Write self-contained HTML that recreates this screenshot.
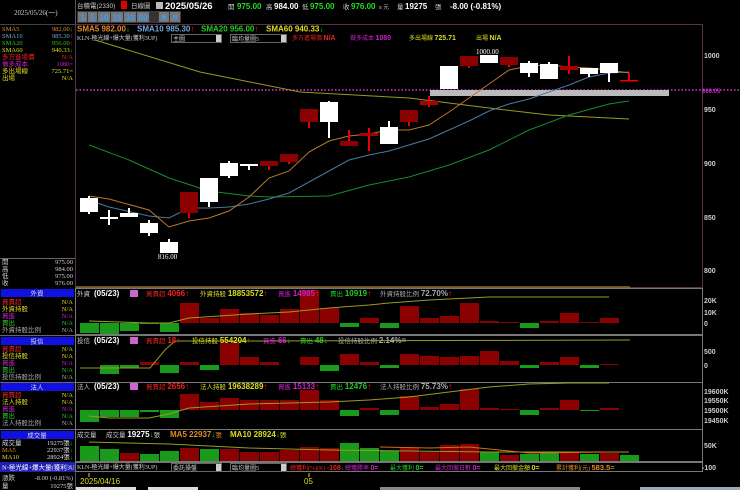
<!DOCTYPE html>
<html><head><meta charset="utf-8"><style>
html,body{margin:0;padding:0;background:#000;width:740px;height:490px;overflow:hidden}
svg{display:block;font-family:"Liberation Sans","Noto Sans CJK TC",sans-serif}
.t{font-size:6.5px}
.b{font-weight:bold;font-size:8px}
</style></head><body>
<svg width="740" height="490" viewBox="0 0 740 490" xmlns="http://www.w3.org/2000/svg">
<rect width="740" height="490" fill="#000"/>
<line x1="75.5" y1="0" x2="75.5" y2="490" stroke="#555"/>
<text x="14" y="15" font-size="7" fill="#ccc" font-family="Liberation Serif">2025/05/26(一)</text>
<line x1="0" y1="24.5" x2="75" y2="24.5" stroke="#444"/>
<g class="t" font-family="Liberation Serif">
<text x="2" y="31" fill="#e08a2a">SMA5</text><text x="73" y="31" fill="#e08a2a" text-anchor="end">982.00<tspan fill="#0c0">↓</tspan></text>
<text x="2" y="38" fill="#6fa8dc">SMA10</text><text x="73" y="38" fill="#6fa8dc" text-anchor="end">985.30<tspan fill="#f22">↑</tspan></text>
<text x="2" y="45" fill="#2c2">SMA20</text><text x="73" y="45" fill="#2c2" text-anchor="end">956.00<tspan fill="#f22">↑</tspan></text>
<text x="2" y="52" fill="#dd2">SMA60</text><text x="73" y="52" fill="#dd2" text-anchor="end">940.33<tspan fill="#0c0">↓</tspan></text>
<text x="2" y="59" fill="#e22">多方進場價</text><text x="73" y="59" fill="#e22" text-anchor="end">N/A</text>
<text x="2" y="66" fill="#c2c">做多成本</text><text x="73" y="66" fill="#c2c" text-anchor="end">1080=</text>
<text x="2" y="73" fill="#dd2">多出場線</text><text x="73" y="73" fill="#dd2" text-anchor="end">725.71=</text>
<text x="2" y="80" fill="#dd2">出場</text><text x="73" y="80" fill="#dd2" text-anchor="end">N/A</text>
</g>
<line x1="0" y1="258.5" x2="75" y2="258.5" stroke="#666"/>
<g class="t" fill="#ccc" font-family="Liberation Serif">
<text x="2" y="264">開</text><text x="73" y="264" text-anchor="end">975.00</text>
<text x="2" y="271">高</text><text x="73" y="271" text-anchor="end">984.00</text>
<text x="2" y="278">低</text><text x="73" y="278" text-anchor="end">975.00</text>
<text x="2" y="285">收</text><text x="73" y="285" text-anchor="end">976.00</text>
</g>
<g class="t" font-family="Liberation Serif">
<rect x="1" y="289" width="73" height="8" fill="#1010e0"/><text x="37" y="295.5" fill="#ddd" text-anchor="middle">外資</text>
<text x="2" y="304" fill="#e22">買賣超</text><text x="73" y="304" fill="#dd2" text-anchor="end">N/A</text>
<text x="2" y="311" fill="#dd2">外資持股</text><text x="73" y="311" fill="#dd2" text-anchor="end">N/A</text>
<text x="2" y="318" fill="#c2c">買進</text><text x="73" y="318" fill="#c2c" text-anchor="end">N/A</text>
<text x="2" y="325" fill="#2c2">賣出</text><text x="73" y="325" fill="#2c2" text-anchor="end">N/A</text>
<text x="2" y="332" fill="#aaa">外資持股比例</text><text x="73" y="332" fill="#aaa" text-anchor="end">N/A</text>
<line x1="0" y1="335.5" x2="75" y2="335.5" stroke="#666"/>
<rect x="1" y="337" width="73" height="8" fill="#1010e0"/><text x="37" y="343.5" fill="#ddd" text-anchor="middle">投信</text>
<text x="2" y="351" fill="#e22">買賣超</text><text x="73" y="351" fill="#dd2" text-anchor="end">N/A</text>
<text x="2" y="358" fill="#dd2">投信持股</text><text x="73" y="358" fill="#dd2" text-anchor="end">N/A</text>
<text x="2" y="365" fill="#c2c">買進</text><text x="73" y="365" fill="#c2c" text-anchor="end">N/A</text>
<text x="2" y="372" fill="#2c2">賣出</text><text x="73" y="372" fill="#2c2" text-anchor="end">N/A</text>
<text x="2" y="379" fill="#aaa">投信持股比例</text><text x="73" y="379" fill="#aaa" text-anchor="end">N/A</text>
<line x1="0" y1="382.5" x2="75" y2="382.5" stroke="#666"/>
<rect x="1" y="383" width="73" height="8" fill="#1010e0"/><text x="37" y="389.5" fill="#ddd" text-anchor="middle">法人</text>
<text x="2" y="397" fill="#e22">買賣超</text><text x="73" y="397" fill="#dd2" text-anchor="end">N/A</text>
<text x="2" y="404" fill="#dd2">法人持股</text><text x="73" y="404" fill="#dd2" text-anchor="end">N/A</text>
<text x="2" y="411" fill="#c2c">買進</text><text x="73" y="411" fill="#c2c" text-anchor="end">N/A</text>
<text x="2" y="418" fill="#2c2">賣出</text><text x="73" y="418" fill="#2c2" text-anchor="end">N/A</text>
<text x="2" y="425" fill="#aaa">法人持股比例</text><text x="73" y="425" fill="#aaa" text-anchor="end">N/A</text>
<line x1="0" y1="429.5" x2="75" y2="429.5" stroke="#666"/>
<rect x="1" y="431" width="73" height="8" fill="#1010e0"/><text x="37" y="437.5" fill="#ddd" text-anchor="middle">成交量</text>
<text x="2" y="445" fill="#ddd">成交量</text><text x="73" y="445" fill="#ddd" text-anchor="end">19275張<tspan fill="#0c0">↓</tspan></text>
<text x="2" y="452" fill="#e08a2a">MA5</text><text x="73" y="452" fill="#ddd" text-anchor="end">22937張<tspan fill="#0c0">↓</tspan></text>
<text x="2" y="459" fill="#dd2">MA10</text><text x="73" y="459" fill="#ddd" text-anchor="end">28924張<tspan fill="#0c0">↓</tspan></text>
<rect x="0" y="462" width="75" height="10" fill="#2020b0"/><text x="2" y="469.5" fill="#fff">N-極光線+爆大量(獲利3U</text>
<text x="2" y="480" fill="#ccc">漲跌</text><text x="73" y="480" fill="#ccc" text-anchor="end">-8.00 (-0.81%)</text>
<text x="2" y="488" fill="#ccc">量</text><text x="73" y="488" fill="#ccc" text-anchor="end">19275張</text>
</g>

<g font-size="6.5" fill="#ccc">
<text x="77" y="8">台積電(2330)</text>
<rect x="121" y="1" width="6" height="8" fill="#d00"/>
<text x="131" y="8">日線圖</text>
<rect x="156" y="2" width="7" height="7" fill="#bbb"/>
</g>
<g class="b">
<text x="165" y="9" fill="#fff" font-size="9.5">2025/05/26</text>
<text x="228" y="9" fill="#ccc" font-size="6.5" font-weight="normal">開</text><text x="237" y="9" fill="#2d2">975.00</text>
<text x="254" y="9" fill="#ccc" font-size="6.5" font-weight="normal" opacity="0"></text>
<text x="266" y="9" fill="#ccc" font-size="6.5" font-weight="normal">高</text><text x="274" y="9" fill="#fff">984.00</text>
<text x="302" y="9" fill="#ccc" font-size="6.5" font-weight="normal">低</text><text x="310" y="9" fill="#2d2">975.00</text>
<text x="343" y="9" fill="#ccc" font-size="6.5" font-weight="normal">收</text><text x="351" y="9" fill="#2d2">976.00</text>
<text x="379" y="9" fill="#ccc" font-size="5.5" font-weight="normal">s 元</text>
<text x="397" y="9" fill="#ccc" font-size="6.5" font-weight="normal">量</text><text x="405" y="9" fill="#fff">19275</text>
<text x="435" y="9" fill="#ccc" font-size="6.5" font-weight="normal">張</text><text x="450" y="9" fill="#fff">-8.00 (-0.81%)</text>
</g>
<g font-size="8" font-weight="bold" fill="#3a9cff" text-anchor="middle">
<rect x="77" y="11" width="104" height="12" fill="#3a3a3a"/>
<rect x="78" y="12" width="9" height="10" fill="#777"/>
<rect x="88" y="12" width="9" height="10" fill="#777"/>
<rect x="98" y="12" width="12" height="10" fill="#777"/>
<rect x="111" y="12" width="12" height="10" fill="#777"/>
<rect x="124" y="12" width="12" height="10" fill="#777"/>
<rect x="137" y="12" width="12" height="10" fill="#777"/>
<rect x="150" y="12" width="8" height="10" fill="#333"/>
<rect x="159" y="12" width="10" height="10" fill="#777"/>
<rect x="170" y="12" width="10" height="10" fill="#777"/>
<text x="82.5" y="20.5">1</text><text x="92.5" y="20.5">5</text><text x="104" y="20.5">10</text><text x="117" y="20.5">15</text><text x="130" y="20.5">30</text><text x="143" y="20.5">60</text>
<text x="164" y="19.5" font-size="5.5">周</text><text x="175" y="19.5" font-size="5.5">月</text>
</g>

<rect x="75.5" y="24.5" width="627" height="263" fill="none" stroke="#553344"/>
<g class="b" font-size="8">
<text x="77" y="31.5" fill="#e08a2a">SMA5 982.00<tspan fill="#0c0">↓</tspan></text>
<text x="137" y="31.5" fill="#6fa8dc">SMA10 985.30<tspan fill="#f22">↑</tspan></text>
<text x="201" y="31.5" fill="#2c2">SMA20 956.00<tspan fill="#f22">↑</tspan></text>
<text x="266" y="31.5" fill="#dd2">SMA60 940.33<tspan fill="#0c0">↓</tspan></text>
</g>
<g font-size="6" font-family="Liberation Serif">
<text x="77" y="40" fill="#ccc">KLN-極光線+爆大量(獲利3UP)</text>
<rect x="171.5" y="34.5" width="50" height="8" fill="#000" stroke="#666"/><text x="173" y="41" fill="#ccc">主圖</text><rect x="216" y="35" width="5" height="7" fill="#ccc"/>
<rect x="230.5" y="34.5" width="56" height="8" fill="#000" stroke="#666"/><text x="232" y="41" fill="#ccc">臨均量圖5</text><rect x="281" y="35" width="5" height="7" fill="#ccc"/>
<text x="292" y="40" fill="#e22">多方進場價 <tspan font-weight="bold" font-family="Liberation Sans" font-size="7">N/A</tspan></text>
<text x="350" y="40" fill="#c2c">做多成本 <tspan font-weight="bold" font-family="Liberation Sans" font-size="7">1080</tspan></text>
<text x="409" y="40" fill="#dd2">多出場線 <tspan font-weight="bold" font-family="Liberation Sans" font-size="7">725.71</tspan></text>
<text x="476" y="40" fill="#dd2">出場 <tspan font-weight="bold" font-family="Liberation Sans" font-size="7">N/A</tspan></text>
</g>
<g font-size="7" fill="#ccc" font-weight="bold">
<text x="704" y="58">1000</text><text x="704" y="112">950</text><text x="704" y="166">900</text><text x="704" y="220">850</text><text x="704" y="273">800</text>
<text x="702" y="93" fill="#c2c" font-size="6">960.05</text>
</g>
<line x1="76" y1="90" x2="740" y2="90" stroke="#d040d0" stroke-width="1.5" stroke-dasharray="1.5 2"/>
<rect x="430" y="90" width="239" height="6" fill="#bbb"/>
<g fill="none" stroke-width="1">
<polyline stroke="#9a9a20" points="95,40 200,72 300,92 409,98 489,108 549,115 629,119"/>
<polyline stroke="#1a8a2a" points="89,145 129,160 169,178 209,191 249,196 269,197 329,196 369,185 409,177 449,165 489,150 529,130 569,115 609,104 629,101"/>
<polyline stroke="#4a7aa0" points="89,200 109,207 149,216 169,218 189,208 209,208 229,207 249,204 269,199 289,193 309,182 329,171 349,160 369,155 389,151 409,145 429,139 449,130 469,121 489,111 509,104 529,99 549,92 569,85 589,77 609,73 629,72"/>
<polyline stroke="#b8782a" points="89,196 109,199 149,210 169,227 189,221 209,218 229,211 249,197 269,178 289,171 309,152 329,141 349,136 369,134 389,130 409,130 429,125 449,112 469,98 489,84 509,70 529,66 549,65 569,67 589,68 609,70 629,73"/>
</g>
<g>
<line x1="89" y1="196" x2="89" y2="214" stroke="#fff" stroke-width="2"/><rect x="80" y="198" width="18" height="14" fill="#fff"/>
<line x1="109" y1="210" x2="109" y2="225" stroke="#fff" stroke-width="2"/><rect x="100" y="217" width="18" height="2" fill="#fff"/>
<line x1="129" y1="208" x2="129" y2="217" stroke="#fff" stroke-width="2"/><rect x="120" y="213" width="18" height="4" fill="#fff"/>
<line x1="149" y1="220" x2="149" y2="236" stroke="#fff" stroke-width="2"/><rect x="140" y="223" width="18" height="10" fill="#fff"/>
<line x1="169" y1="239" x2="169" y2="253" stroke="#fff" stroke-width="2"/><rect x="160" y="242" width="18" height="11" fill="#fff"/>
<line x1="189" y1="192" x2="189" y2="218" stroke="#e00" stroke-width="2"/><rect x="180" y="192" width="18" height="21" fill="#8b0000"/>
<line x1="209" y1="178" x2="209" y2="207" stroke="#fff" stroke-width="2"/><rect x="200" y="178" width="18" height="24" fill="#fff"/>
<line x1="229" y1="161" x2="229" y2="178" stroke="#fff" stroke-width="2"/><rect x="220" y="163" width="18" height="13" fill="#fff"/>
<line x1="249" y1="164" x2="249" y2="170" stroke="#fff" stroke-width="2"/><rect x="240" y="164" width="18" height="2" fill="#fff"/>
<line x1="269" y1="161" x2="269" y2="170" stroke="#e00" stroke-width="2"/><rect x="260" y="161" width="18" height="5" fill="#8b0000"/>
<line x1="289" y1="154" x2="289" y2="164" stroke="#e00" stroke-width="2"/><rect x="280" y="154" width="18" height="8" fill="#8b0000"/>
<line x1="309" y1="109" x2="309" y2="128" stroke="#e00" stroke-width="2"/><rect x="300" y="109" width="18" height="13" fill="#8b0000"/>
<line x1="329" y1="101" x2="329" y2="138" stroke="#fff" stroke-width="2"/><rect x="320" y="102" width="18" height="20" fill="#fff"/>
<line x1="349" y1="130" x2="349" y2="146" stroke="#e00" stroke-width="2"/><rect x="340" y="141" width="18" height="5" fill="#8b0000"/>
<line x1="369" y1="128" x2="369" y2="151" stroke="#e00" stroke-width="2"/><rect x="360" y="133" width="18" height="3" fill="#a00"/>
<line x1="389" y1="121" x2="389" y2="144" stroke="#fff" stroke-width="2"/><rect x="380" y="127" width="18" height="17" fill="#fff"/>
<line x1="409" y1="110" x2="409" y2="126" stroke="#e00" stroke-width="2"/><rect x="400" y="110" width="18" height="12" fill="#8b0000"/>
<line x1="429" y1="96" x2="429" y2="107" stroke="#e00" stroke-width="2"/><rect x="420" y="101" width="18" height="4" fill="#a00"/>
<rect x="440" y="66" width="18" height="23" fill="#fff"/>
<line x1="469" y1="56" x2="469" y2="68" stroke="#e00" stroke-width="2"/><rect x="460" y="56" width="18" height="10" fill="#8b0000"/>
<rect x="480" y="55" width="18" height="8" fill="#fff"/>
<line x1="509" y1="57" x2="509" y2="67" stroke="#e00" stroke-width="2"/><rect x="500" y="57" width="18" height="8" fill="#8b0000"/>
<line x1="529" y1="61" x2="529" y2="77" stroke="#fff" stroke-width="2"/><rect x="520" y="63" width="18" height="10" fill="#fff"/>
<line x1="549" y1="62" x2="549" y2="79" stroke="#fff" stroke-width="2"/><rect x="540" y="64" width="18" height="15" fill="#fff"/>
<line x1="569" y1="56" x2="569" y2="74" stroke="#e00" stroke-width="2"/><rect x="560" y="66" width="18" height="4" fill="#a00"/>
<line x1="589" y1="68" x2="589" y2="77" stroke="#fff" stroke-width="2"/><rect x="580" y="68" width="18" height="6" fill="#fff"/>
<line x1="609" y1="63" x2="609" y2="82" stroke="#fff" stroke-width="2"/><rect x="600" y="63" width="18" height="10" fill="#fff"/>
<line x1="629" y1="73" x2="629" y2="81" stroke="#e00" stroke-width="2"/><rect x="620" y="80" width="18" height="1.5" fill="#e00"/>
</g>
<text x="158" y="259" font-size="7" fill="#fff" font-family="Liberation Serif">816.00</text>
<text x="476" y="54" font-size="7" fill="#fff" font-family="Liberation Serif">1000.00</text>
<line x1="76" y1="287" x2="630" y2="287" stroke="#8a6a30" stroke-width="1.5"/>

<g fill="none" stroke="#777">
<rect x="75.5" y="288.5" width="627" height="46"/>
<rect x="75.5" y="335.5" width="627" height="47"/>
<rect x="75.5" y="382.5" width="627" height="47"/>
<rect x="75.5" y="429.5" width="627" height="32"/>
<rect x="75.5" y="462.5" width="627" height="9"/>
</g>

<g fill="#8b0000">
<rect x="180" y="303" width="19" height="20"/><rect x="200" y="318" width="19" height="5"/><rect x="220" y="309" width="19" height="14"/><rect x="240" y="313" width="19" height="10"/><rect x="260" y="315" width="19" height="8"/><rect x="280" y="309" width="19" height="14"/><rect x="300" y="290" width="19" height="33"/><rect x="320" y="308" width="19" height="15"/><rect x="360" y="318" width="19" height="5"/>
<rect x="400" y="306" width="19" height="17"/><rect x="420" y="318" width="19" height="5"/><rect x="440" y="316" width="19" height="7"/><rect x="460" y="303" width="19" height="20"/><rect x="480" y="321" width="19" height="2"/><rect x="500" y="322" width="19" height="1"/><rect x="540" y="321" width="19" height="2"/><rect x="560" y="313" width="19" height="10"/><rect x="580" y="322" width="19" height="1"/><rect x="600" y="318" width="19" height="5"/>
</g>
<g fill="#1a9a1a">
<rect x="80" y="323" width="19" height="10"/><rect x="100" y="323" width="19" height="11"/><rect x="120" y="323" width="19" height="8"/><rect x="140" y="323" width="19" height="1"/><rect x="160" y="323" width="19" height="9"/><rect x="340" y="323" width="19" height="4"/><rect x="380" y="323" width="19" height="5"/><rect x="520" y="323" width="19" height="5"/>
</g>
<polyline fill="none" stroke="#9a9a20" points="89,321 149,323 169,323 189,318 249,314 289,312 329,308 369,305 389,303 429,300 489,297 549,297 609,297"/>
<g font-size="8">
<text x="77" y="296" fill="#ccc" font-size="6.5">外資</text><text x="94" y="296" fill="#fff" font-weight="bold">(05/23)</text>
<rect x="130" y="290" width="8" height="7" fill="#c6c"/>
<text x="146" y="296" fill="#e22" font-size="6.5">買賣超 <tspan font-weight="bold" font-size="8">4066↑</tspan></text>
<text x="200" y="296" fill="#dd2" font-size="6.5">外資持股 <tspan font-weight="bold" font-size="8">18853572<tspan fill="#f22">↑</tspan></tspan></text>
<text x="278" y="296" fill="#c2c" font-size="6.5">買進 <tspan font-weight="bold" font-size="8">14985<tspan fill="#f22">↑</tspan></tspan></text>
<text x="330" y="296" fill="#2c2" font-size="6.5">賣出 <tspan font-weight="bold" font-size="8">10919<tspan fill="#f22">↑</tspan></tspan></text>
<text x="380" y="296" fill="#aaa" font-size="6.5">外資持股比例 <tspan font-weight="bold" font-size="8">72.70%<tspan fill="#f22">↑</tspan></tspan></text>
</g>
<g font-size="7" fill="#ccc" font-weight="bold"><text x="704" y="303">20K</text><text x="704" y="315">10K</text><text x="704" y="326">0</text></g>

<g fill="#8b0000">
<rect x="140" y="362" width="19" height="3"/><rect x="180" y="362" width="19" height="3"/><rect x="220" y="343" width="19" height="22"/><rect x="240" y="357" width="19" height="8"/><rect x="260" y="362" width="19" height="3"/><rect x="300" y="357" width="19" height="8"/><rect x="340" y="354" width="19" height="11"/><rect x="360" y="362" width="19" height="3"/>
<rect x="400" y="354" width="19" height="11"/><rect x="420" y="356" width="19" height="9"/><rect x="440" y="357" width="19" height="8"/><rect x="460" y="356" width="19" height="9"/><rect x="480" y="351" width="19" height="14"/><rect x="500" y="361" width="19" height="4"/><rect x="540" y="362" width="19" height="3"/><rect x="560" y="357" width="19" height="8"/><rect x="600" y="364" width="19" height="1"/>
</g>
<g fill="#1a9a1a">
<rect x="100" y="365" width="19" height="9"/><rect x="120" y="365" width="19" height="3"/><rect x="160" y="365" width="19" height="8"/><rect x="200" y="365" width="19" height="5"/><rect x="320" y="365" width="19" height="6"/><rect x="380" y="365" width="19" height="3"/><rect x="520" y="365" width="19" height="3"/><rect x="580" y="365" width="19" height="3"/>
</g>
<polyline fill="none" stroke="#9a9a20" points="80,368 150,368 165,350 175,341 260,341 630,340"/>
<g font-size="8">
<text x="77" y="343" fill="#ccc" font-size="6.5">投信</text><text x="94" y="343" fill="#fff" font-weight="bold">(05/23)</text>
<rect x="130" y="337" width="8" height="7" fill="#c6c"/>
<text x="146" y="343" fill="#e22" font-size="6.5">買賣超 <tspan font-weight="bold" font-size="8">18↑</tspan></text>
<text x="192" y="343" fill="#dd2" font-size="6.5">投信持股 <tspan font-weight="bold" font-size="8">554204<tspan fill="#f22">↑</tspan></tspan></text>
<text x="263" y="343" fill="#c2c" font-size="6.5">買進 <tspan font-weight="bold" font-size="8">66<tspan fill="#0c0">↓</tspan></tspan></text>
<text x="300" y="343" fill="#2c2" font-size="6.5">賣出 <tspan font-weight="bold" font-size="8">48<tspan fill="#0c0">↓</tspan></tspan></text>
<text x="338" y="343" fill="#aaa" font-size="6.5">投信持股比例 <tspan font-weight="bold" font-size="8">2.14%=</tspan></text>
</g>
<g font-size="7" fill="#ccc" font-weight="bold"><text x="704" y="354">500</text><text x="704" y="368">0</text></g>

<g fill="#8b0000">
<rect x="180" y="394" width="19" height="16"/><rect x="200" y="402" width="19" height="8"/><rect x="220" y="398" width="19" height="12"/><rect x="240" y="400" width="19" height="10"/><rect x="260" y="400" width="19" height="10"/><rect x="280" y="400" width="19" height="10"/><rect x="300" y="390" width="19" height="20"/><rect x="320" y="400" width="19" height="10"/><rect x="360" y="408" width="19" height="2"/>
<rect x="400" y="396" width="19" height="14"/><rect x="420" y="407" width="19" height="3"/><rect x="440" y="404" width="19" height="6"/><rect x="460" y="389" width="19" height="21"/><rect x="480" y="408" width="19" height="2"/><rect x="500" y="409" width="19" height="1"/><rect x="540" y="408" width="19" height="2"/><rect x="560" y="400" width="19" height="10"/><rect x="600" y="408" width="19" height="2"/>
</g>
<g fill="#1a9a1a">
<rect x="80" y="410" width="19" height="12"/><rect x="100" y="410" width="19" height="7"/><rect x="120" y="410" width="19" height="7"/><rect x="140" y="410" width="19" height="2"/><rect x="160" y="410" width="19" height="8"/><rect x="340" y="410" width="19" height="6"/><rect x="380" y="410" width="19" height="5"/><rect x="520" y="410" width="19" height="5"/><rect x="580" y="410" width="19" height="1"/>
</g>
<polyline fill="none" stroke="#9a9a20" points="89,416 109,418 149,418 169,414 189,408 249,404 329,402 369,400 409,397 449,392 489,387 529,384 569,383 609,383"/>
<g font-size="8">
<text x="77" y="389" fill="#ccc" font-size="6.5">法人</text><text x="94" y="389" fill="#fff" font-weight="bold">(05/23)</text>
<rect x="130" y="383" width="8" height="7" fill="#c6c"/>
<text x="146" y="389" fill="#e22" font-size="6.5">買賣超 <tspan font-weight="bold" font-size="8">2656↑</tspan></text>
<text x="200" y="389" fill="#dd2" font-size="6.5">法人持股 <tspan font-weight="bold" font-size="8">19638289<tspan fill="#f22">↑</tspan></tspan></text>
<text x="278" y="389" fill="#c2c" font-size="6.5">買進 <tspan font-weight="bold" font-size="8">15133<tspan fill="#f22">↑</tspan></tspan></text>
<text x="330" y="389" fill="#2c2" font-size="6.5">賣出 <tspan font-weight="bold" font-size="8">12476<tspan fill="#f22">↑</tspan></tspan></text>
<text x="380" y="389" fill="#aaa" font-size="6.5">法人持股比例 <tspan font-weight="bold" font-size="8">75.73%<tspan fill="#f22">↑</tspan></tspan></text>
</g>
<g font-size="7" fill="#ccc" font-weight="bold"><text x="704" y="394">19600K</text><text x="704" y="403">19550K</text><text x="704" y="413">19500K</text><text x="704" y="423">19450K</text></g>

<g>
<rect x="80" y="446" width="19" height="15" fill="#1a9a1a"/><rect x="100" y="449" width="19" height="12" fill="#1a9a1a"/><rect x="120" y="453" width="19" height="8" fill="#8b0000"/><rect x="140" y="454" width="19" height="7" fill="#1a9a1a"/><rect x="160" y="451" width="19" height="10" fill="#1a9a1a"/><rect x="180" y="448" width="19" height="13" fill="#8b0000"/><rect x="200" y="449" width="19" height="12" fill="#1a9a1a"/><rect x="220" y="449" width="19" height="12" fill="#8b0000"/><rect x="240" y="452" width="19" height="9" fill="#8b0000"/><rect x="260" y="452" width="19" height="9" fill="#8b0000"/><rect x="280" y="450" width="19" height="11" fill="#8b0000"/><rect x="300" y="447" width="19" height="14" fill="#8b0000"/><rect x="320" y="448" width="19" height="13" fill="#8b0000"/><rect x="340" y="443" width="19" height="18" fill="#1a9a1a"/><rect x="360" y="448" width="19" height="13" fill="#1a9a1a"/>
<rect x="380" y="451" width="19" height="10" fill="#1a9a1a"/><rect x="400" y="448" width="19" height="13" fill="#8b0000"/><rect x="420" y="452" width="19" height="9" fill="#8b0000"/><rect x="440" y="445" width="19" height="16" fill="#8b0000"/><rect x="460" y="444" width="19" height="17" fill="#8b0000"/><rect x="480" y="452" width="19" height="9" fill="#1a9a1a"/><rect x="500" y="455" width="19" height="6" fill="#8b0000"/><rect x="520" y="454" width="19" height="7" fill="#1a9a1a"/><rect x="540" y="453" width="19" height="8" fill="#1a9a1a"/><rect x="560" y="453" width="19" height="8" fill="#8b0000"/><rect x="580" y="454" width="19" height="7" fill="#1a9a1a"/><rect x="600" y="453" width="19" height="8" fill="#8b0000"/><rect x="620" y="455" width="19" height="6" fill="#1a9a1a"/>
</g>
<polyline fill="none" stroke="#9a9a20" points="89,442 169,444 249,448 329,450 409,451 489,452 569,452 629,452"/>
<polyline fill="none" stroke="#d07020" points="380,447 429,448 469,447 529,453 609,452"/>
<g font-size="8">
<text x="77" y="437" fill="#ccc" font-size="6.5">成交量</text>
<text x="106" y="437" fill="#ccc" font-size="6.5">成交量 <tspan font-weight="bold" font-size="8" fill="#fff">19275<tspan fill="#0c0">↓</tspan></tspan>張</text>
<text x="170" y="437" fill="#e08a2a" font-weight="bold">MA5 22937<tspan fill="#0c0">↓</tspan><tspan font-weight="normal" font-size="6.5">張</tspan></text>
<text x="230" y="437" fill="#dd2" font-weight="bold">MA10 28924<tspan fill="#0c0">↓</tspan><tspan font-weight="normal" font-size="6.5">張</tspan></text>
</g>
<g font-size="7" fill="#ccc" font-weight="bold"><text x="704" y="448">50K</text><text x="702" y="470">-100</text></g>

<g font-size="6" font-family="Liberation Serif">
<text x="77" y="469" fill="#ccc">KLN-極光線+爆大量(獲利3UP)</text>
<rect x="171.5" y="463.5" width="50" height="8" fill="#000" stroke="#666"/><text x="173" y="470" fill="#ccc">委託操盤</text><rect x="216" y="464" width="5" height="7" fill="#ccc"/>
<rect x="230.5" y="463.5" width="56" height="8" fill="#000" stroke="#666"/><text x="232" y="470" fill="#ccc">臨均量圖5</text><rect x="281" y="464" width="5" height="7" fill="#ccc"/>
<text x="290" y="470" fill="#e22">總獲利(%)(K) <tspan font-weight="bold" font-family="Liberation Sans" font-size="7">-108</tspan><tspan fill="#0c0">↓</tspan></text>
<text x="345" y="470" fill="#c2c">總獲勝率 <tspan font-weight="bold" font-family="Liberation Sans" font-size="7">0=</tspan></text>
<text x="390" y="470" fill="#2c2">最大獲利 <tspan font-weight="bold" font-family="Liberation Sans" font-size="7">0=</tspan></text>
<text x="435" y="470" fill="#c2c">最大回撤日數 <tspan font-weight="bold" font-family="Liberation Sans" font-size="7">0=</tspan></text>
<text x="494" y="470" fill="#dd2">最大回撤金額 <tspan font-weight="bold" font-family="Liberation Sans" font-size="7">0=</tspan></text>
<text x="556" y="470" fill="#e08a2a">累計獲利(元) <tspan font-weight="bold" font-family="Liberation Sans" font-size="7.5">583.5=</tspan></text>
</g>
<line x1="89" y1="473" x2="89" y2="477" stroke="#dd2"/>
<text x="80" y="484" font-size="8" fill="#dd2">2025/04/16</text>
<line x1="309" y1="473" x2="309" y2="477" stroke="#dd2"/>
<text x="304" y="484" font-size="8" fill="#dd2">05</text>
<rect x="76" y="487" width="60" height="3" fill="#ddd"/><rect x="148" y="487" width="50" height="3" fill="#ddd"/><rect x="380" y="487" width="200" height="3" fill="#888"/><rect x="640" y="487" width="100" height="3" fill="#9ab"/>
</svg>
</body></html>
